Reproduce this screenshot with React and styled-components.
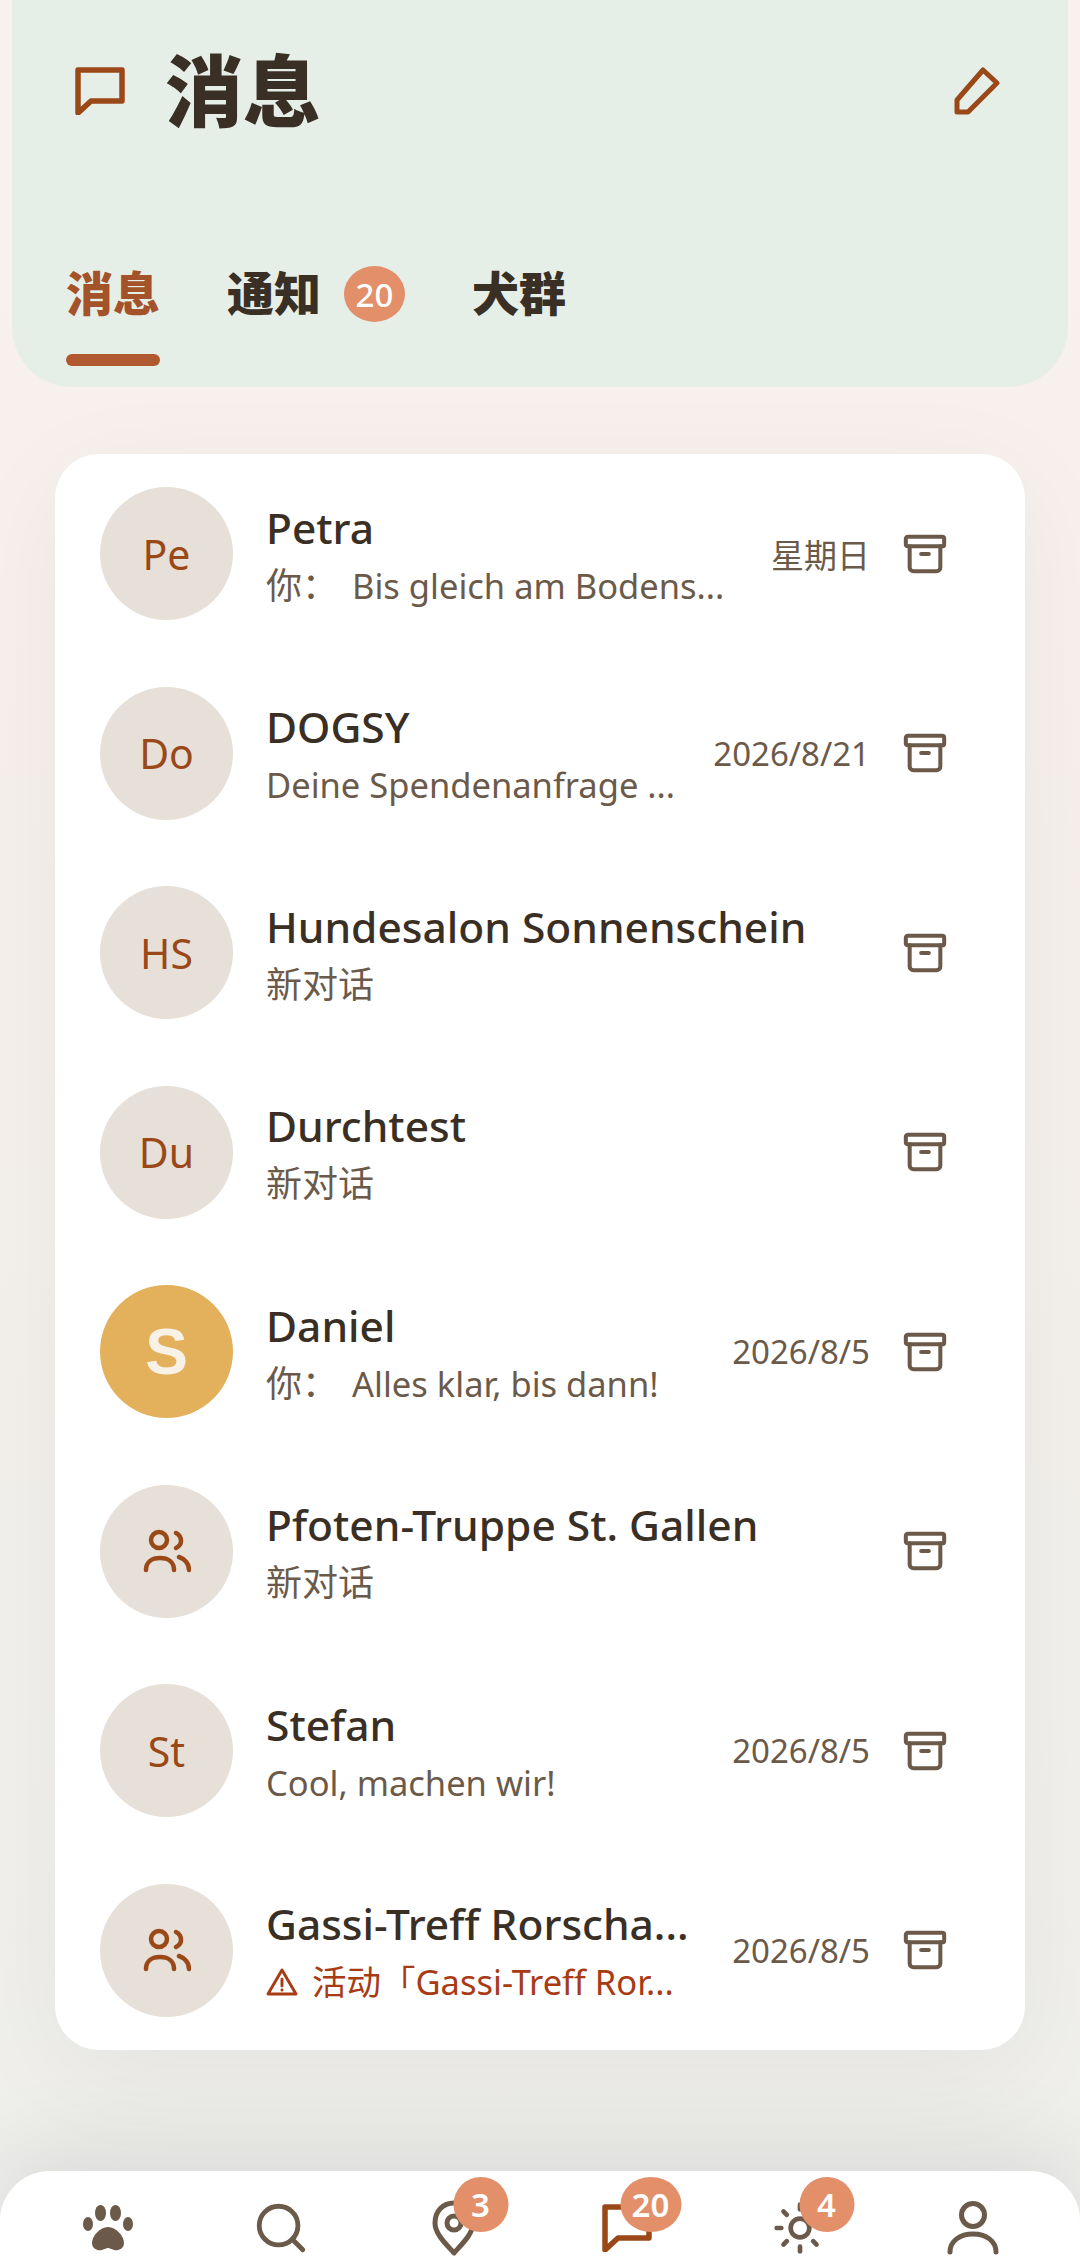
import React from "react";
import styled, { createGlobalStyle } from "styled-components";
import { Archive, Search, Sun } from "lucide-react";

const INK = "#3a2f24";
const MUTED = "#6b5a4a";
const RUST = "#9a4818";
const BADGE = "#e38f6a";
const SANS = `"Noto Sans", "Noto Sans CJK SC", sans-serif`;

const GlobalStyle = createGlobalStyle`
  html, body {
    margin: 0;
    padding: 0;
  }
  body {
    font-family: ${SANS};
    background: #f5f0ec;
  }
`;

const Page = styled.div`
  width: 1080px;
  height: 2268px;
  display: flex;
  flex-direction: column;
  overflow: hidden;
  background: linear-gradient(to bottom, #f8f1ed 0%, #f6f0ec 40%, #f1f0ec 75%, #eeeeec 100%);
`;

const Header = styled.header`
  height: 387px;
  margin: 0 12px;
  flex: none;
  box-sizing: border-box;
  background: #e6eee8;
  border-radius: 0 0 60px 60px;
`;

const TitleRow = styled.div`
  height: 182px;
  padding: 0 68px 0 63px;
  display: flex;
  align-items: center;
  gap: 40px;
`;

const Title = styled.h1`
  flex: 1;
  margin: 0;
  font-size: 78px;
  font-weight: 900;
  line-height: 1;
  color: ${INK};
`;

const Tabs = styled.nav`
  margin-top: 76px;
  padding-left: 54px;
  display: flex;
  gap: 67px;
`;

const Tab = styled.div`
  display: flex;
  flex-direction: column;
`;

const TabLabel = styled.div`
  height: 64px;
  display: flex;
  align-items: center;
  gap: 23px;
  font-size: 47px;
  font-weight: 900;
  color: ${(p) => (p.$active ? "#a4522a" : INK)};
`;

const TabBar = styled.div`
  width: 94px;
  height: 12px;
  margin-top: 32px;
  border-radius: 6px;
  background: ${(p) => (p.$active ? "#b0582f" : "transparent")};
`;

const TabBadge = styled.span`
  width: 61px;
  height: 56px;
  margin-top: 8px;
  border-radius: 50%;
  display: flex;
  align-items: center;
  justify-content: center;
  font-size: 33px;
  font-weight: 500;
  color: #fff;
  background: ${BADGE};
`;

const Main = styled.main`
  flex: 1;
  padding: 67px 55px 0;
`;

const Card = styled.section`
  padding: 33px 0;
  display: flex;
  flex-direction: column;
  gap: 66.5px;
  background: #fff;
  border-radius: 44px;
  box-shadow: 0 24px 110px rgba(0, 0, 0, 0.05);
`;

const Row = styled.article`
  height: 133px;
  padding: 0 77px 0 45px;
  display: flex;
  align-items: center;
`;

const Avatar = styled.div`
  width: 133px;
  height: 133px;
  flex: none;
  margin-right: 33px;
  border-radius: 50%;
  display: flex;
  align-items: center;
  justify-content: center;
  font-size: ${(p) => (p.$photo ? "64px" : "41px")};
  font-weight: ${(p) => (p.$photo ? 700 : 400)};
  font-family: ${(p) => (p.$photo ? `"Liberation Sans", sans-serif` : "inherit")};
  color: ${(p) => (p.$photo ? "#f8f1e6" : RUST)};
  background: ${(p) => (p.$photo ? "#e3b15c" : "#e6e0d8")};
`;

const Body = styled.div`
  flex: 1;
  min-width: 0;
  padding-top: 5px;
`;

const Name = styled.div`
  font-size: 42.5px;
  font-weight: 500;
  line-height: 58px;
  color: ${INK};
  white-space: nowrap;
`;

const Preview = styled.div`
  font-size: ${(p) => (p.$cjk ? "36px" : "34.5px")};
  line-height: 57px;
  color: ${(p) => (p.$alert ? "#a83a14" : MUTED)};
  white-space: nowrap;
`;

const YouLabel = styled.span`
  margin-right: 14px;
  font-size: 36px;
`;

const AlertIcon = styled.svg`
  width: 32px;
  height: 32px;
  margin-right: 14px;
  vertical-align: -3px;
`;

const Stamp = styled.time`
  flex: none;
  margin-right: 32px;
  font-size: 33px;
  color: ${MUTED};
`;

const ArchiveIcon = styled(Archive)`
  flex: none;
  color: ${MUTED};
`;

const BottomNav = styled.footer`
  height: 97px;
  flex: none;
  box-sizing: border-box;
  padding: 0 21px;
  display: grid;
  grid-template-columns: repeat(6, 1fr);
  background: #fff;
  border-radius: 50px 50px 0 0;
  box-shadow: 0 -20px 90px rgba(0, 0, 0, 0.09);
`;

const NavItem = styled.div`
  position: relative;
  padding-top: 17px;
  display: flex;
  align-items: center;
  justify-content: center;
  color: ${(p) => (p.$active ? RUST : MUTED)};
`;

const NavBadge = styled.span`
  position: absolute;
  top: 6px;
  left: calc(50% + ${(p) => (p.$wide ? "24px" : "27px")});
  width: ${(p) => (p.$wide ? "61px" : "55px")};
  height: 55px;
  transform: translateX(-50%);
  border-radius: 50%;
  display: flex;
  align-items: center;
  justify-content: center;
  font-size: 33px;
  font-weight: 600;
  color: #fff;
  background: ${BADGE};
`;

const Bubble = ({ size = 50, color = RUST }) => (
  <svg width={size} height={size * 0.96} viewBox="0 0 50 48" fill="none" stroke={color} strokeWidth="5.5" strokeLinejoin="round" strokeLinecap="round">
    <path d="M3 3H47V34H16L3 46Z" />
  </svg>
);

const Pencil = () => (
  <svg width="46" height="50" viewBox="0 0 46 50" fill="none" stroke={RUST} strokeWidth="5" strokeLinejoin="round" strokeLinecap="round">
    <path d="M29 4L43 17L14 46H3V34Z" />
  </svg>
);

const Paw = () => (
  <svg width="50" height="46" viewBox="0 0 50 46" fill={MUTED}>
    <ellipse cx="5" cy="19" rx="5" ry="7" />
    <ellipse cx="17.5" cy="8" rx="5.5" ry="8" />
    <ellipse cx="32.5" cy="8" rx="5.5" ry="8" />
    <ellipse cx="45" cy="19" rx="5" ry="7" />
    <path d="M25 22C33 22 41 31 41 38C41 44 35 46 31 45C28 44 27 43 25 43C23 43 22 44 19 45C15 46 9 44 9 38C9 31 17 22 25 22Z" />
  </svg>
);

const Pin = () => (
  <svg width="44" height="56" viewBox="0 0 44 56" fill="none" stroke={MUTED} strokeWidth="5" strokeLinejoin="round">
    <path d="M22 53C14 44 3 34 3 23C3 11 11 3 22 3C33 3 41 11 41 23C41 34 30 44 22 53Z" />
    <circle cx="22" cy="23" r="7" />
  </svg>
);

const Person = () => (
  <svg width="52" height="54" viewBox="0 0 52 54" fill="none" stroke={MUTED} strokeWidth="5" strokeLinecap="round">
    <circle cx="26" cy="14" r="11.5" />
    <path d="M3 51C3 40 13 33 26 33C39 33 49 40 49 51" />
  </svg>
);

const Group = () => (
  <svg width="48" height="44" viewBox="0 0 48 44" fill="none" stroke={RUST} strokeWidth="4.5" strokeLinecap="round">
    <circle cx="16" cy="11" r="8" />
    <path d="M3 41C3 33 9 29 17 29C25 29 31 33 31 41" />
    <path d="M33 4C37 6 38 9 38 12C38 15 37 17 33 19" />
    <path d="M36 28C42 30 46 35 46 41" />
  </svg>
);

const Warning = () => (
  <AlertIcon viewBox="0 0 24 24" fill="none" stroke="#a83a14" strokeWidth="2.2" strokeLinejoin="round" strokeLinecap="round">
    <path d="M12 3L22.5 21H1.5Z" />
    <path d="M12 10V15M12 18V18.1" />
  </AlertIcon>
);

const CHATS = [
  { avatar: "Pe", name: "Petra", you: true, text: "Bis gleich am Bodens...", stamp: "星期日" },
  { avatar: "Do", name: "DOGSY", text: "Deine Spendenanfrage ...", stamp: "2026/8/21" },
  { avatar: "HS", name: "Hundesalon Sonnenschein", cjk: true, text: "新对话" },
  { avatar: "Du", name: "Durchtest", cjk: true, text: "新对话" },
  { avatar: "S", photo: true, name: "Daniel", you: true, text: "Alles klar, bis dann!", stamp: "2026/8/5" },
  { group: true, name: "Pfoten-Truppe St. Gallen", cjk: true, text: "新对话" },
  { avatar: "St", name: "Stefan", text: "Cool, machen wir!", stamp: "2026/8/5" },
  { group: true, name: "Gassi-Treff Rorscha...", alert: true, text: "活动「Gassi-Treff Ror...", stamp: "2026/8/5" },
];

export default function App() {
  return (
    <Page>
      <GlobalStyle />
      <Header>
        <TitleRow>
          <Bubble />
          <Title>消息</Title>
          <Pencil />
        </TitleRow>
        <Tabs>
          <Tab>
            <TabLabel $active>消息</TabLabel>
            <TabBar $active />
          </Tab>
          <Tab>
            <TabLabel>
              通知
              <TabBadge>20</TabBadge>
            </TabLabel>
            <TabBar />
          </Tab>
          <Tab>
            <TabLabel>犬群</TabLabel>
            <TabBar />
          </Tab>
        </Tabs>
      </Header>

      <Main>
        <Card>
          {CHATS.map((chat) => (
            <Row key={chat.name}>
              <Avatar $photo={chat.photo}>{chat.group ? <Group /> : chat.avatar}</Avatar>
              <Body>
                <Name>{chat.name}</Name>
                <Preview $alert={chat.alert} $cjk={chat.cjk}>
                  {chat.you && <YouLabel>你：</YouLabel>}
                  {chat.alert && <Warning />}
                  {chat.text}
                </Preview>
              </Body>
              {chat.stamp && <Stamp>{chat.stamp}</Stamp>}
              <ArchiveIcon size={46} strokeWidth={2.1} />
            </Row>
          ))}
        </Card>
      </Main>

      <BottomNav>
        <NavItem>
          <Paw />
        </NavItem>
        <NavItem>
          <Search size={58} strokeWidth={2} />
        </NavItem>
        <NavItem>
          <Pin />
          <NavBadge>3</NavBadge>
        </NavItem>
        <NavItem $active>
          <Bubble />
          <NavBadge $wide>20</NavBadge>
        </NavItem>
        <NavItem>
          <Sun size={56} strokeWidth={2} />
          <NavBadge>4</NavBadge>
        </NavItem>
        <NavItem>
          <Person />
        </NavItem>
      </BottomNav>
    </Page>
  );
}
